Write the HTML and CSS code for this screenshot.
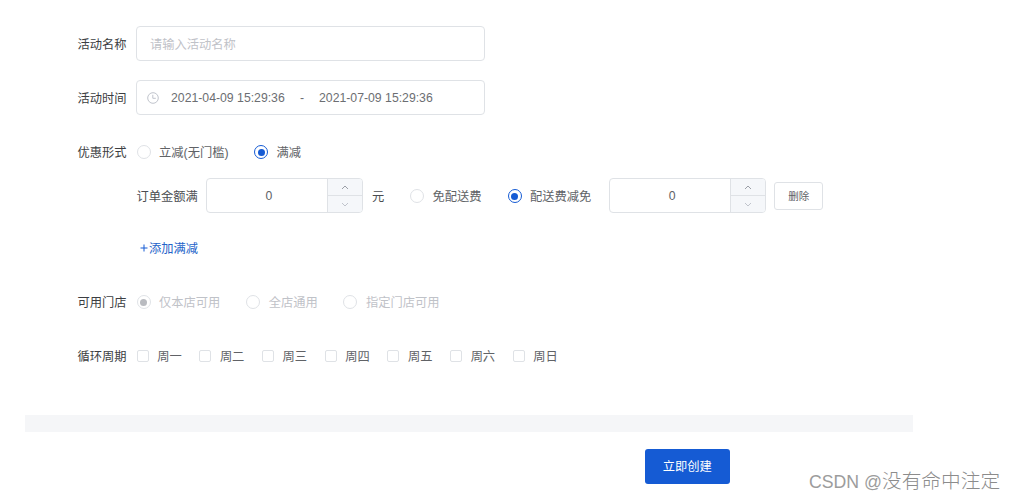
FILE: index.html
```html
<!DOCTYPE html>
<html lang="zh-CN">
<head>
<meta charset="utf-8">
<title>活动</title>
<link rel="stylesheet" href="styles.css">
</head>
<body>
<form class="form">
  <div class="row">
    <span class="label">活动名称</span>
    <div class="field placeholder"><span class="text">请输入活动名称</span></div>
  </div>
  <div class="row">
    <span class="label">活动时间</span>
    <div class="field range">
      <svg class="clock" viewBox="0 0 12 12"><circle cx="6" cy="6" r="5.3"/><path d="M5.8 2.8v3.5h3"/></svg>
      <span class="date">2021-04-09 15:29:36</span><span class="dash">-</span><span class="date">2021-07-09 15:29:36</span>
    </div>
  </div>
  <div class="row row-type">
    <span class="label">优惠形式</span>
    <div class="options lead">
      <span class="option"><i class="radio"></i><span class="text">立减(无门槛)</span></span>
      <span class="option"><i class="radio checked"></i><span class="text">满减</span></span>
    </div>
  </div>
  <div class="row row-rule">
    <span class="rule-label">订单金额满</span>
    <div class="number"><span class="value">0</span>
      <span class="steps"><span class="step"><svg viewBox="0 0 8 5"><path d="M1 4l3-3 3 3"/></svg></span><span class="step down"><svg viewBox="0 0 8 5"><path d="M1 1l3 3 3-3"/></svg></span></span>
    </div>
    <span class="unit">元</span>
    <div class="options">
      <span class="option"><i class="radio"></i><span class="text">免配送费</span></span>
      <span class="option"><i class="radio checked"></i><span class="text">配送费减免</span></span>
    </div>
    <div class="number second"><span class="value">0</span>
      <span class="steps"><span class="step"><svg viewBox="0 0 8 5"><path d="M1 4l3-3 3 3"/></svg></span><span class="step down"><svg viewBox="0 0 8 5"><path d="M1 1l3 3 3-3"/></svg></span></span>
    </div>
    <span class="delete">删除</span>
  </div>
  <div class="row row-add"><span class="add"><svg class="plus" viewBox="0 0 8 8"><path d="M4 .5v7M.5 4h7"/></svg><span class="text">添加满减</span></span></div>
  <div class="row row-store">
    <span class="label">可用门店</span>
    <div class="options lead disabled">
      <span class="option"><i class="radio checked"></i><span class="text">仅本店可用</span></span>
      <span class="option"><i class="radio"></i><span class="text">全店通用</span></span>
      <span class="option"><i class="radio"></i><span class="text">指定门店可用</span></span>
    </div>
  </div>
  <div class="row">
    <span class="label">循环周期</span>
    <div class="days">
      <span class="day"><i class="box"></i><span class="text">周一</span></span>
      <span class="day"><i class="box"></i><span class="text">周二</span></span>
      <span class="day"><i class="box"></i><span class="text">周三</span></span>
      <span class="day"><i class="box"></i><span class="text">周四</span></span>
      <span class="day"><i class="box"></i><span class="text">周五</span></span>
      <span class="day"><i class="box"></i><span class="text">周六</span></span>
      <span class="day"><i class="box"></i><span class="text">周日</span></span>
    </div>
  </div>
</form>
<div class="divider"></div>
<footer class="footer">
  <span class="submit">立即创建</span>
  <span class="watermark"><span class="latin">CSDN @</span>没有命中注定</span>
</footer>
</body>
</html>
```

FILE: styles.css
```css
* { box-sizing: border-box; }
body {
  margin: 0;
  width: 1015px;
  height: 499px;
  overflow: hidden;
  background: #fff;
  color: #606266;
  font: 12.25px/18px "Liberation Sans", "Noto Sans CJK SC", sans-serif;
  white-space: nowrap;
}
.form { padding: 26px 0 0 77px; height: 415px; }
.row { display: flex; align-items: center; height: 35px; margin-bottom: 19px; }
.text, .label, .rule-label, .unit { padding-top: 2px; }
.label { width: 59px; padding-left: .4px; color: #3c3e42; }
.field {
  display: flex;
  align-items: center;
  width: 349px;
  height: 35px;
  padding: 0 13px;
  border: 1px solid #dfe2e6;
  border-radius: 4px;
}
.placeholder { color: #bfc2c8; }
.range { padding-left: 10px; color: #6c6e72; }
.clock { width: 12px; height: 12px; margin-right: 12px; fill: none; stroke: #c0c4cc; stroke-width: 1; }
.date { width: 114px; }
.dash { width: 34px; text-align: center; }

.options { display: flex; gap: 26px; }
.lead { gap: 25.5px; margin-left: .6px; }
.option { display: flex; align-items: center; }
.radio {
  display: flex;
  align-items: center;
  justify-content: center;
  width: 14px;
  height: 14px;
  margin-top: 1px;
  margin-right: 8.5px;
  border: 1px solid #dfe2e6;
  border-radius: 50%;
}
.radio.checked { border-color: #155bd4; }
.radio.checked::after { content: ""; width: 7px; height: 7px; border-radius: 50%; background: #155bd4; }
.disabled { gap: 25.8px; color: #bfc2c8; }
.disabled .radio.checked { border-color: #e0e3e7; }
.disabled .radio.checked::after { background: #b9bbc0; }

.row-type { margin-bottom: 9px; }
.row-rule { padding-left: 59.5px; }
.rule-label { width: 69.5px; color: #4b4d51; }
.number { display: flex; width: 157px; height: 35px; border: 1px solid #dfe2e6; border-radius: 4px; overflow: hidden; }
.value { flex: 1; padding: 1px 0 0 4px; line-height: 33px; text-align: center; }
.steps { display: flex; flex-direction: column; width: 35px; border-left: 1px solid #dfe2e6; background: #f5f7fa; }
.step { display: flex; flex: 1; align-items: center; justify-content: center; }
.step svg { width: 8px; height: 5px; fill: none; stroke: #9b9fa7; stroke-width: 1; }
.step.down { border-top: 1px solid #dfe2e6; }
.step.down svg { stroke: #c0c4cc; }
.unit { width: 38.5px; padding-left: 9px; margin-right: 8.5px; color: #4b4d51; }
.second { margin-left: 18px; }
.delete {
  width: 49px;
  height: 28px;
  margin-left: 8px;
  border: 1px solid #dfe2e6;
  border-radius: 3px;
  font-size: 10.5px;
  line-height: 27px;
  text-align: center;
}
.row-add { margin-top: -2px; padding-left: 63px; }
.add { display: flex; align-items: center; color: #2463c9; }
.plus { width: 8px; height: 8px; margin-right: 1px; stroke: #155bd4; stroke-width: 1; }

.days { display: flex; margin-left: .5px; }
.day { display: flex; align-items: center; width: 62.7px; }
.box { width: 12px; height: 12px; margin-top: 1px; margin-right: 8.7px; border: 1px solid #dfe2e6; border-radius: 2px; }

.divider { width: 888px; height: 17px; margin-left: 25px; background: #f5f6f8; }
.footer { display: flex; align-items: flex-start; padding: 17px 0 0 644.5px; }
.submit {
  width: 85.5px;
  height: 35px;
  border-radius: 3px;
  background: #155bd4;
  color: #fff;
  line-height: 37px;
  text-align: center;
}
.watermark { margin: 16px 0 0 79px; color: #8c8c8c; font-size: 19.7px; line-height: 30px; font-family: "Noto Sans CJK SC", sans-serif; font-weight: 300; }
.latin { color: #9c9c9c; font-family: "Liberation Sans", sans-serif; font-size: 17.7px; }
```
